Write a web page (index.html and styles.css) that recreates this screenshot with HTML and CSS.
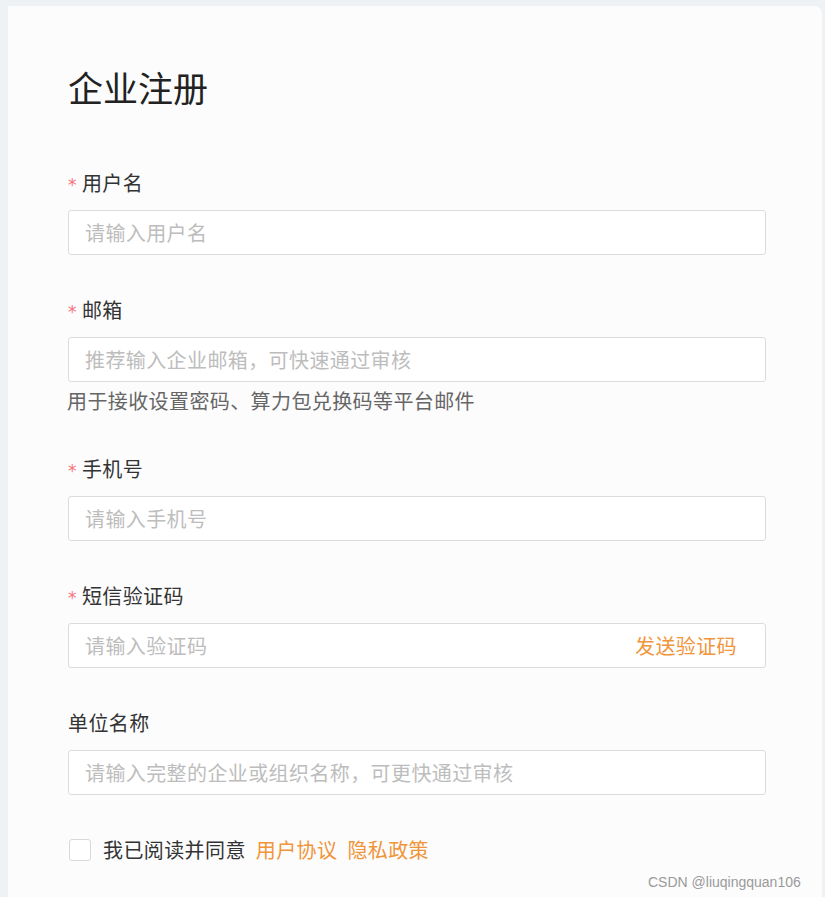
FILE: index.html
```html
<!DOCTYPE html>
<html lang="zh-CN">
<head>
<meta charset="utf-8">
<title>企业注册</title>
<link rel="stylesheet" href="styles.css">
</head>
<body>
<div class="page">
  <div class="card">
    <h1 class="title">企业注册</h1>
    <form class="form">
      <div class="item">
        <div class="label"><span class="req">*</span>用户名</div>
        <div class="input"><span class="ph">请输入用户名</span></div>
      </div>
      <div class="item">
        <div class="label"><span class="req">*</span>邮箱</div>
        <div class="input"><span class="ph">推荐输入企业邮箱，可快速通过审核</span></div>
        <div class="help">用于接收设置密码、算力包兑换码等平台邮件</div>
      </div>
      <div class="item">
        <div class="label"><span class="req">*</span>手机号</div>
        <div class="input"><span class="ph">请输入手机号</span></div>
      </div>
      <div class="item">
        <div class="label"><span class="req">*</span>短信验证码</div>
        <div class="input"><span class="ph">请输入验证码</span><span class="send">发送验证码</span></div>
      </div>
      <div class="item">
        <div class="label">单位名称</div>
        <div class="input"><span class="ph">请输入完整的企业或组织名称，可更快通过审核</span></div>
      </div>
      <div class="agree">
        <span class="check"></span>
        <span class="agree-text">我已阅读并同意</span>
        <span class="link">用户协议</span>
        <span class="link">隐私政策</span>
      </div>
    </form>
  </div>
  <div class="watermark">CSDN @liuqingquan106</div>
</div>
</body>
</html>
```

FILE: styles.css
```css
* { box-sizing: border-box; }
html, body { margin: 0; padding: 0; }
body {
  background: #eef2f4;
  font-family: "Noto Sans CJK SC", "Noto Sans", sans-serif;
  color: #333;
  overflow: hidden;
}
.page {
  width: 825px;
  height: 897px;
  padding: 6px 3px 0 8px;
  position: relative;
  overflow: hidden;
}
.card {
  background: #fcfcfd;
  border-radius: 0 8px 0 0;
  height: 1000px;
  padding: 63px 56px 0 60px;
}
.title {
  margin: 0 0 66px 0;
  font-size: 35px;
  line-height: 35px;
  font-weight: 400;
  color: #222;
}
.form { width: 698px; letter-spacing: 0.4px; }
.item { margin-bottom: 42px; }
.label {
  font-size: 20px;
  line-height: 26px;
  height: 26px;
  margin-bottom: 14px;
  color: #333;
  display: flex;
  align-items: center;
}
.req {
  color: #f2737a;
  font-family: "DejaVu Sans", sans-serif;
  font-size: 17px;
  line-height: 26px;
  margin-right: 5px;
  margin-left: 0;
  position: relative;
  top: 2px;
}
.input {
  height: 45px;
  border: 1px solid #dcdcdc;
  border-radius: 3px;
  background: #fff;
  display: flex;
  align-items: center;
  justify-content: space-between;
  padding: 0 28px 0 16px;
  font-size: 20px;
}
.ph { color: #bdbdbd; }
.send { color: #f0953a; }
.help {
  margin-top: 6px;
  font-size: 20px;
  line-height: 26px;
  color: #666;
  margin-left: -1px;
}
.agree {
  display: flex;
  align-items: center;
  font-size: 20px;
  line-height: 26px;
  margin-top: 13px;
}
.check {
  width: 22px;
  height: 22px;
  border: 1px solid #d9d9d9;
  border-radius: 3px;
  background: #fff;
  margin-left: 1px;
  margin-right: 12px;
}
.agree-text { color: #333; }
.link { color: #f0953a; margin-left: 10px; }
.watermark {
  position: absolute;
  left: 648px;
  top: 873px;
  font-family: "Liberation Sans", sans-serif;
  font-size: 14px;
  line-height: 18px;
  color: #9a9a9a;
}
```
